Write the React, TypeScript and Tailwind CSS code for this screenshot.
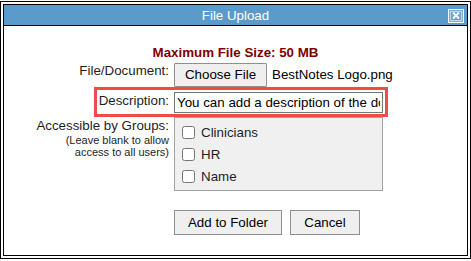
import React from "react";

const font = { fontFamily: '"Liberation Sans", Arial, sans-serif' };

function CloseIcon() {
  return (
    <div className="w-[16px] h-[14px] border border-white bg-[#7fb0d8] flex items-center justify-center">
      <div className="w-[12px] h-[10px] border border-[#b9d4ea] bg-[#6da4d0] flex items-center justify-center">
        <svg width="8" height="7" viewBox="0 0 8 7">
          <path d="M1 0.5 L7 6.5 M7 0.5 L1 6.5" stroke="white" strokeWidth="2" />
        </svg>
      </div>
    </div>
  );
}

function Check({ label }: { label: string }) {
  return (
    <label className="flex items-center h-[22px]">
      <input type="checkbox" className="m-0 w-[13px] h-[13px]" />
      <span className="ml-[6px] text-[13.33px] leading-[15px] text-[#1e1e1e]">{label}</span>
    </label>
  );
}

export default function App() {
  return (
    <div className="w-[471px] h-[261px] bg-white pt-px" style={font}>
      <div className="h-[258px] border border-black p-[2px]">
        <div className="h-full border border-black flex flex-col">
          <div className="h-[21px] bg-[#5b9bcb] border-b border-black grid grid-cols-[1fr_auto_1fr] items-center">
            <div />
            <div className="text-white text-[13.33px] leading-[15px]">File Upload</div>
            <div className="flex justify-end pr-[3px] pt-px">
              <CloseIcon />
            </div>
          </div>
          <div className="pt-[19px] flex flex-col">
            <div className="text-center text-[13.33px] leading-[15px] font-bold text-[#800000]">
              Maximum File Size: 50 MB
            </div>
            <div className="flex mt-[3px]">
              <div className="w-[165px] text-right text-[13.33px] leading-[15px] text-[#1e1e1e]">File/Document:</div>
              <div className="ml-[5px] flex items-center">
                <div className="w-[93px] h-[24px] border border-[#8f8f8f] bg-[#efefef] flex items-center justify-center text-[13.33px] text-black rounded-[1px]">
                  Choose File
                </div>
                <span className="ml-[5px] text-[13.33px] text-black">BestNotes Logo.png</span>
              </div>
            </div>
            <div className="flex mt-[5px] relative">
              <div className="w-[165px] text-right text-[13.33px] leading-[15px] pt-[1px] text-[#1e1e1e]">Description:</div>
              <input
                className="ml-[5px] w-[209px] h-[21px] border border-[#767676] px-[2px] text-[13.33px] text-black outline-none bg-white"
                style={font}
                defaultValue="You can add a description of the document here"
              />
              <div className="absolute left-[90px] top-[-5px] w-[294px] h-[30px] border-[3px] border-[#f04a4a] pointer-events-none" />
            </div>
            <div className="flex mt-[4px]">
              <div className="w-[165px] text-right text-[#1e1e1e]">
                <div className="text-[13.33px] leading-[15px] pt-px">Accessible by Groups:</div>
                <div className="text-[11px] leading-[12px] mt-px">(Leave blank to allow</div>
                <div className="text-[11px] leading-[12px]">access to all users)</div>
              </div>
              <div className="ml-[5px] w-[209px] h-[74px] border border-[#a3a3a3] bg-[#f0f0f0] pl-[7px] pt-[3px]">
                <Check label="Clinicians" />
                <Check label="HR" />
                <Check label="Name" />
              </div>
            </div>
            <div className="flex mt-[19px] ml-[170px] gap-[8px]">
              <button className="w-[108px] h-[25px] border border-[#8f8f8f] bg-[#efefef] text-[13.33px] text-black" style={font}>
                Add to Folder
              </button>
              <button className="w-[70px] h-[25px] border border-[#8f8f8f] bg-[#efefef] text-[13.33px] text-black" style={font}>
                Cancel
              </button>
            </div>
          </div>
        </div>
      </div>
    </div>
  );
}
